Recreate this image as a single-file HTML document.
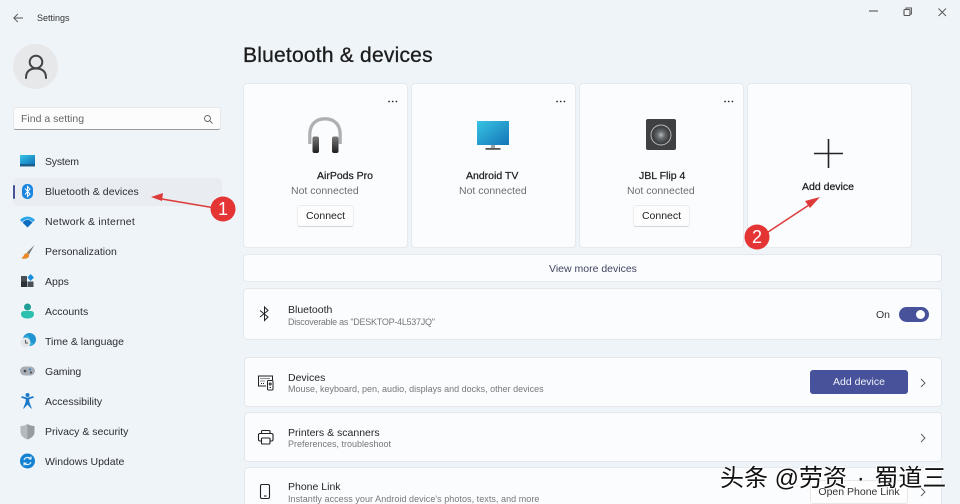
<!DOCTYPE html>
<html><head><meta charset="utf-8"><style>
html,body{margin:0;padding:0}
#p{position:relative;width:960px;height:504px;overflow:hidden;background:#eff4f9;font-family:"Liberation Sans","Noto Sans CJK SC",sans-serif;color:#1f2328;filter:blur(.3px)}
.t{position:absolute;white-space:nowrap;font-size:10.5px;line-height:14px}
.n{left:45px;color:#2a2e33}
.c{position:absolute;top:83px;width:163px;height:163px;background:#fbfcfe;border:1px solid #e6e9ed;border-radius:4px}
.r{position:absolute;left:243px;width:697px;background:#fbfcfe;border:1px solid #e4e8ec;border-radius:4px}
.r2{left:244px;width:696px}
.b{color:#222;-webkit-text-stroke:.25px #222}
.g{color:#6b6e72}
.cn{position:absolute;width:55px;height:20px;border:1px solid #ececec;border-bottom-color:#d4d4d4;border-radius:3px;background:#fdfdfd;text-align:center;font-size:10.5px;line-height:20px;color:#222}
.s{font-size:9px;color:#75787c}
svg{position:absolute;overflow:visible}
</style></head><body><div id="p">
<svg style="left:13px;top:12px" width="11" height="12" viewBox="0 0 11 12" fill="none" stroke="#555" stroke-width=".9"><path d="M10 6H.8M4.800 2L.8 6L4.800 10"/></svg>
<span class="t" style="left:37px;top:11px;font-size:9px;color:#333">Settings</span>
<svg style="left:856px;top:4px" width="100" height="20" fill="none" stroke="#555" stroke-width=".9"><path d="M13 7H22" stroke-width="1.100"/><rect x="48" y="5.500" width="6" height="6" rx="1" stroke-width="1.100"/><path d="M50 5V4H55.500V10H54.500"/><path d="M82.500 4.500L90 12M90 4.500L82.500 12"/></svg>

<div style="position:absolute;left:13px;top:44px;width:45px;height:45px;border-radius:50%;background:#e6e8ea"></div>
<svg style="left:24px;top:53px" width="24" height="26" fill="none" stroke="#444" stroke-width="2"><circle cx="12" cy="9" r="6.300"/><path d="M2 25C2 18 6 15.500 12 15.500S22 18 22 25" stroke-linecap="round"/></svg>

<div style="position:absolute;left:13px;top:107px;width:208px;height:23px;background:#fcfcfd;border:1px solid #e8e8e8;border-bottom:1px solid #9a9a9a;border-radius:3px;box-sizing:border-box"></div>
<span class="t" style="left:21px;top:112px;color:#666">Find a setting</span>
<svg style="left:203px;top:114px" width="11" height="11" fill="none" stroke="#666" stroke-width=".9"><circle cx="4.500" cy="4.500" r="3"/><path d="M7 7L9.500 9.500"/></svg>

<div style="position:absolute;left:13px;top:178px;width:209px;height:28px;background:#e9edf1;border-radius:4px"></div>
<div style="position:absolute;left:13px;top:185px;width:2px;height:14px;background:#47529b;border-radius:1px"></div>

<svg style="left:20px;top:155px" width="15" height="12"><defs><linearGradient id="a" x1="0" y1="0" x2="1" y2="1"><stop offset="0" stop-color="#35c5e6"/><stop offset="1" stop-color="#1173bb"/></linearGradient></defs><rect width="15" height="9" y="0" fill="url(#a)"/><rect y="9" width="15" height="2.500" fill="#1d5f8c"/></svg>
<svg style="left:22px;top:184px" width="11" height="15"><rect width="11" height="15" rx="5" fill="#1a86df"/><path d="M3 4.500L8 10L5.500 12.500V2.500L8 5L3 10.500" stroke="#fff" stroke-width="1" fill="none"/></svg>
<svg style="left:20px;top:216px" width="15" height="12"><path d="M0 4C4 -.5 11 -.5 15 4L13 6C9 2.500 6 2.500 2 6Z" fill="#2aa4ea"/><path d="M2.500 6.500C6 3 9 3 12.500 6.500L7.500 11.500Z" fill="#0c6cc0"/></svg>
<svg style="left:20px;top:245px" width="16" height="15"><path d="M14.500 0L7 7.500L9 9.500Z" fill="#777"/><path d="M7 8C3.500 8 4.500 12 1 13C5 15 10 13 9 9.500Z" fill="#e8892c"/></svg>
<svg style="left:21px;top:274px" width="14" height="13"><rect x="0" y="2" width="6" height="5.500" fill="#4a5058"/><rect x="0" y="7.500" width="6" height="5.500" fill="#2c3036"/><rect x="6.500" y="7.500" width="6" height="5.500" fill="#4a5058"/><path d="M9.500 0L13 3.500L9.500 7L6.500 3.500Z" fill="#1c8ee0"/></svg>
<svg style="left:21px;top:303px" width="13" height="16"><circle cx="6.500" cy="4" r="3.500" fill="#1f9e95"/><path d="M0 11C0 8.500 2 8 3 8H10C11 8 13 8.500 13 11C13 14.500 9.500 15.500 6.500 15.500S0 14.500 0 11Z" fill="#2cc1ae"/></svg>
<svg style="left:20px;top:333px" width="16" height="16"><circle cx="9.500" cy="6.500" r="6.500" fill="#2094d2"/><path d="M6 1.500C9 3 11 6 10 9L14 11L8 13Z" fill="#3cc3d8" opacity=".6"/><circle cx="5.500" cy="9.500" r="5" fill="#e3e5e8"/><path d="M5.500 7V10H8" stroke="#555" fill="none"/></svg>
<svg style="left:20px;top:366px" width="16" height="10"><rect width="15" height="9" y=".5" rx="4.500" fill="#a8aeb5"/><circle cx="5" cy="5" r="1.300" fill="#444"/><circle cx="10" cy="3.500" r="1" fill="#2a78c0"/><circle cx="11" cy="6.500" r="1" fill="#444"/></svg>
<svg style="left:21px;top:393px" width="13" height="16"><circle cx="6.500" cy="2" r="2" fill="#1a79c9"/><path d="M0.500 4.500L5 6V9L2.500 15.500L6.500 11L10.500 15.500L8 9V6L12.500 4.500L12 3.500L6.500 5L1 3.500Z" fill="#1a79c9" stroke="#1a79c9" stroke-width=".6"/></svg>
<svg style="left:20px;top:424px" width="15" height="16"><path d="M7.500 0C10 1.500 12 2 14.500 2V8C14.500 12 10.500 14.500 7.500 15.500C4.500 14.500 .5 12 .5 8V2C3 2 5 1.500 7.500 0Z" fill="#b4b9bd"/><path d="M7.500 0C10 1.500 12 2 14.500 2V8C14.500 12 10.500 14.500 7.500 15.500Z" fill="#969ca1"/></svg>
<svg style="left:20px;top:453px" width="15" height="16"><circle cx="7.500" cy="8" r="7.500" fill="#1482d2"/><path d="M4 7C5 4 9 3.500 11 6M11 9C10 12 6 12.500 4 10M11 3.500V6H8.500M4 12.500V10H6.500" fill="none" stroke="#e9f5ff" stroke-width="1.100"/></svg>

<span class="t n" style="top:155px;letter-spacing:-.2px">System</span>
<span class="t n" style="top:185px;letter-spacing:.05px">Bluetooth &amp; devices</span>
<span class="t n" style="top:215px;letter-spacing:.2px">Network &amp; internet</span>
<span class="t n" style="top:245px">Personalization</span>
<span class="t n" style="top:275px">Apps</span>
<span class="t n" style="top:305px">Accounts</span>
<span class="t n" style="top:335px">Time &amp; language</span>
<span class="t n" style="top:365px;letter-spacing:-.1px">Gaming</span>
<span class="t n" style="top:395px">Accessibility</span>
<span class="t n" style="top:425px">Privacy &amp; security</span>
<span class="t n" style="top:455px">Windows Update</span>

<span class="t" style="left:243px;top:43px;font-size:21px;line-height:26px;color:#1c1c1c;letter-spacing:.22px;-webkit-text-stroke:.3px #1c1c1c">Bluetooth &amp; devices</span>

<div class="c" style="left:243px"></div><div class="c" style="left:411px"></div><div class="c" style="left:579px"></div><div class="c" style="left:747px"></div>
<svg style="left:388px;top:100px" width="10" height="3" fill="#333"><circle cx="1" cy="1.500" r=".9"/><circle cx="4.700" cy="1.500" r=".9"/><circle cx="8.400" cy="1.500" r=".9"/></svg>
<svg style="left:556px;top:100px" width="10" height="3" fill="#333"><circle cx="1" cy="1.500" r=".9"/><circle cx="4.700" cy="1.500" r=".9"/><circle cx="8.400" cy="1.500" r=".9"/></svg>
<svg style="left:724px;top:100px" width="10" height="3" fill="#333"><circle cx="1" cy="1.500" r=".9"/><circle cx="4.700" cy="1.500" r=".9"/><circle cx="8.400" cy="1.500" r=".9"/></svg>

<svg style="left:307px;top:117px" width="37" height="37" fill="none"><defs><linearGradient id="h" x1="0" y1="0" x2="0" y2="1"><stop offset="0" stop-color="#7a7a7a"/><stop offset="1" stop-color="#1e1e1e"/></linearGradient></defs><path d="M2.800 27V18C2.800 7 9 1.800 18 1.800S33.200 7 33.200 18V27" stroke="#aeb1b4" stroke-width="3.300"/><rect x="5.500" y="19.500" width="6.500" height="16.500" rx="2" fill="url(#h)"/><rect x="25" y="19.500" width="6.500" height="16.500" rx="2" fill="url(#h)"/></svg>
<svg style="left:477px;top:121px" width="32" height="29"><defs><linearGradient id="v" x1="0" y1="0" x2="1" y2="1"><stop offset="0" stop-color="#38c4e2"/><stop offset="1" stop-color="#1474b8"/></linearGradient></defs><rect width="32" height="24" fill="url(#v)" rx=".5"/><rect x="14" y="24" width="4" height="3.500" fill="#9aa4ab"/><rect x="8.500" y="27" width="15" height="1.800" fill="#555"/></svg>
<svg style="left:646px;top:119px" width="31" height="32"><defs><radialGradient id="k"><stop offset="0" stop-color="#b8bcc0"/><stop offset=".35" stop-color="#6a6e71"/><stop offset=".8" stop-color="#3e4042"/></radialGradient></defs><rect width="30" height="31" rx="2" fill="#3f4042"/><circle cx="15" cy="16" r="10" fill="url(#k)" stroke="#bcbfc2" stroke-width=".9"/></svg>
<svg style="left:814px;top:139px" width="29" height="29" stroke="#222" stroke-width="1.600"><path d="M14.500 0V29M0 14.500H29"/></svg>

<span class="t b" style="left:317px;top:169px">AirPods Pro</span>
<span class="t g" style="left:291px;top:184px">Not connected</span>
<div class="cn" style="left:297px;top:205px">Connect</div>
<span class="t b" style="left:466px;top:169px">Android TV</span>
<span class="t g" style="left:459px;top:184px">Not connected</span>
<span class="t b" style="left:639px;top:169px">JBL Flip 4</span>
<span class="t g" style="left:627px;top:184px">Not connected</span>
<div class="cn" style="left:633px;top:205px">Connect</div>
<span class="t b" style="left:802px;top:180px">Add device</span>

<div class="r" style="top:254px;height:26px"></div>
<span class="t" style="left:549px;top:262px;color:#3f4560">View more devices</span>

<div class="r" style="top:288px;height:50px"></div>
<svg style="left:259px;top:306px" width="12" height="16" fill="none" stroke="#222" stroke-width="1"><path d="M1 4.500L9 11L5.500 14.500V1L9 4.500L1 11"/></svg>
<span class="t" style="left:288px;top:303px">Bluetooth</span>
<span class="t s" style="left:288px;top:315px;letter-spacing:-.26px">Discoverable as "DESKTOP-4L537JQ"</span>
<span class="t" style="left:876px;top:308px;color:#333">On</span>
<div style="position:absolute;left:899px;top:307px;width:30px;height:15px;border-radius:8px;background:#47529b"></div>
<div style="position:absolute;left:916px;top:310px;width:9px;height:9px;border-radius:50%;background:#fff"></div>

<div class="r r2" style="top:357px;height:48px"></div>
<svg style="left:257px;top:375px" width="17" height="16" fill="none" stroke="#222" stroke-width="1"><path d="M9 11H1.500V1H15.500V5"/><path d="M3.500 3.500H13M3.500 6H8M4 8.500H8" stroke-dasharray="1 1"/><rect x="10.500" y="5.500" width="5.500" height="9.500" rx="1"/><circle cx="13.200" cy="9" r="1"/><path d="M12.500 12.500H14"/></svg>
<span class="t" style="left:288px;top:371px">Devices</span>
<span class="t s" style="left:288px;top:382px">Mouse, keyboard, pen, audio, displays and docks, other devices</span>
<div style="position:absolute;left:810px;top:370px;width:98px;height:24px;border-radius:3px;background:#47529b;color:#f0f1f7;font-size:10.5px;line-height:24px;text-align:center">Add device</div>
<svg style="left:920px;top:378px" width="6" height="10" fill="none" stroke="#555" stroke-width=".9"><path d="M1 1L5 5L1 9"/></svg>

<div class="r r2" style="top:412px;height:48px"></div>
<svg style="left:258px;top:430px" width="16" height="15" fill="none" stroke="#222" stroke-width="1.100"><path d="M3.500 3.500V1.500C3.500 1 4 .5 4.500 .5H11C11.500 .5 12 1 12 1.500V3.500"/><path d="M3.500 11H2C1 11 .5 10.500 .5 9.500V5C.5 4 1 3.500 2 3.500H13.500C14.500 3.500 15 4 15 5V9.500C15 10.500 14.500 11 13.500 11H12"/><rect x="3.500" y="8" width="8.500" height="6" rx="1"/></svg>
<span class="t" style="left:288px;top:426px">Printers &amp; scanners</span>
<span class="t s" style="left:288px;top:437px">Preferences, troubleshoot</span>
<svg style="left:920px;top:433px" width="6" height="10" fill="none" stroke="#555" stroke-width=".9"><path d="M1 1L5 5L1 9"/></svg>

<div class="r r2" style="top:467px;height:60px"></div>
<svg style="left:260px;top:484px" width="11" height="16" fill="none" stroke="#222" stroke-width="1.100"><rect x=".5" y=".5" width="9" height="14" rx="1.500"/><path d="M4 12H6.500"/></svg>
<span class="t" style="left:288px;top:480px">Phone Link</span>
<span class="t s" style="left:288px;top:492px;letter-spacing:.05px">Instantly access your Android device's photos, texts, and more</span>
<div style="position:absolute;left:810px;top:480px;width:98px;height:24px;border:1px solid #e8e8e8;box-sizing:border-box;border-radius:3px;background:#fdfdfd;font-size:10.5px;line-height:22px;text-align:center;color:#333">Open Phone Link</div>
<svg style="left:920px;top:487px" width="6" height="10" fill="none" stroke="#555" stroke-width=".9"><path d="M1 1L5 5L1 9"/></svg>

<svg style="left:0;top:0" width="960" height="504" fill="none"><path d="M221 209L156 198" stroke="#dd3a3a" stroke-width="1.500"/><path d="M151 197L163 193L162 201Z" fill="#dd3a3a"/><path d="M762 236L812 203" stroke="#dd3a3a" stroke-width="1.500"/><path d="M820 197L805 201L810 208Z" fill="#dd3a3a"/><circle cx="223" cy="209" r="12.500" fill="#e53434"/><circle cx="757" cy="237" r="12.500" fill="#e53434"/></svg>
<span class="t" style="left:218px;top:200px;font-size:18px;line-height:18px;color:#fff">1</span>
<span class="t" style="left:752px;top:228px;font-size:18px;line-height:18px;color:#fff">2</span>

<span class="t" style="left:720px;top:466px;font-size:24px;line-height:26px;color:#111;text-shadow:1px 1px 0 #fff,-1px -1px 0 #fff">头条 @劳资 <span style="margin:0 3px">·</span> 蜀道三</span>
</div></body></html>
